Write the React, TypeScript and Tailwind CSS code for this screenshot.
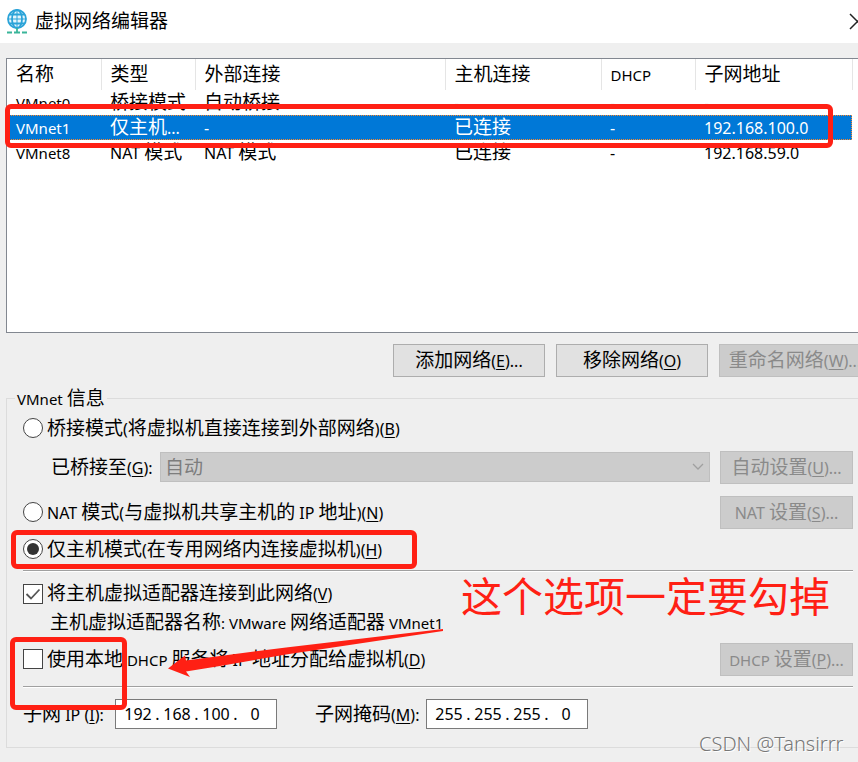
import React, { useState } from "react";

const RED = "#ff2014";

const columns = [
  { name: "名称", width: "w-[94px]" },
  { name: "类型", width: "w-[94px]" },
  { name: "外部连接", width: "w-[250px]" },
  { name: "主机连接", width: "w-[156px]" },
  { name: "DHCP", width: "w-[94px]" },
  { name: "子网地址", width: "w-[157px]" },
];

const networks = [
  ["VMnet0", "桥接模式", "自动桥接", "-", "-", "-"],
  ["VMnet1", "仅主机...", "-", "已连接", "-", "192.168.100.0"],
  ["VMnet8", "NAT 模式", "NAT 模式", "已连接", "-", "192.168.59.0"],
];

// Latin runs are set smaller than the Chinese ones, long words a step below digits and brackets
const Mixed: React.FC<{ text: string; hotkey?: string; tail?: string }> = ({ text, hotkey, tail }) => (
  <span className="whitespace-pre">
    {text.split(/([\x20-\x7e]+)/).map((part, i) =>
      i % 2 ? (
        <span key={i} className={/[A-Za-z]{4}/.test(part) ? "text-[15px] leading-none" : "text-base leading-none"}>
          {part}
        </span>
      ) : (
        part
      )
    )}
    {hotkey && (
      <span className="text-base leading-none">
        (<span className="underline underline-offset-2">{hotkey}</span>){tail}
      </span>
    )}
  </span>
);

const Button: React.FC<{ text: string; hotkey: string; tail?: string; width: string; disabled?: boolean }> = ({
  text,
  hotkey,
  tail,
  width,
  disabled,
}) => (
  <button
    type="button"
    disabled={disabled}
    className={`${width} flex h-[33px] shrink-0 items-center justify-center border ${
      disabled ? "border-[#bfbfbf] bg-[#cccccc] text-[#8a8a8a]" : "border-[#adadad] bg-[#e1e1e1] text-black"
    }`}
  >
    <Mixed text={text} hotkey={hotkey} tail={tail} />
  </button>
);

const Radio: React.FC<{ value: string; mode: string; onPick: (v: string) => void; text: string; hotkey: string }> = ({
  value,
  mode,
  onPick,
  text,
  hotkey,
}) => (
  <label className="flex items-center gap-1">
    <input
      type="radio"
      name="mode"
      checked={mode === value}
      onChange={() => onPick(value)}
      className="grid size-5 shrink-0 appearance-none place-items-center rounded-full border border-[#444] bg-white before:size-3 before:rounded-full checked:before:bg-[#333] checked:before:content-['']"
    />
    <Mixed text={text} hotkey={hotkey} />
  </label>
);

const Checkbox: React.FC<{ initial: boolean; text: string; hotkey: string }> = ({ initial, text, hotkey }) => {
  const [on, setOn] = useState(initial);
  return (
    <label className="flex items-center gap-1">
      <span className="grid shrink-0 place-items-center">
        <input
          type="checkbox"
          checked={on}
          onChange={() => setOn(!on)}
          className="col-start-1 row-start-1 size-5 appearance-none border border-[#444] bg-white"
        />
        {on && (
          <svg viewBox="0 0 20 20" className="pointer-events-none col-start-1 row-start-1 size-5" fill="none" stroke="#555" strokeWidth="1.8">
            <path d="M3.500 10l4.500 4.500 8.500-9" />
          </svg>
        )}
      </span>
      <Mixed text={text} hotkey={hotkey} />
    </label>
  );
};

const IpField: React.FC<{ id: string; octets: string[] }> = ({ id, octets }) => (
  <div className="flex h-[30px] w-[162px] items-center border border-[#7a7a7a] bg-white pl-[6px] text-base leading-none">
    {octets.map((octet, i) => (
      <React.Fragment key={i}>
        {i > 0 && <span className="w-[7px] text-center">.</span>}
        <input
          id={i === 0 ? id : undefined}
          aria-label={`${id} ${i + 1}`}
          defaultValue={octet}
          className="w-8 bg-transparent text-center outline-none"
        />
      </React.Fragment>
    ))}
  </div>
);

const Divider = () => <div className="border-t border-b border-t-[#a0a0a0] border-b-white" />;

const GlobeIcon = () => (
  <svg viewBox="0 0 22 26" className="h-[26px] w-[22px]" fill="none" stroke="#2ba3d8" strokeWidth="1.8">
    <circle cx="11" cy="10" r="9" fill="#e4f5fc" />
    <ellipse cx="11" cy="10" rx="5" ry="9" />
    <path d="M3.500 5.500h15M3.500 14.500h15" />
    <path d="M11 1v18M2 10h18" strokeWidth="1" />
    <path d="M11 19v4" stroke="#3ab59a" />
    <path d="M1 23.500h5M8 23.500h6M16 23.500h5" stroke="#3ab59a" strokeWidth="2" />
  </svg>
);

const App: React.FC = () => {
  const [mode, setMode] = useState("host");

  return (
    <div className="relative min-h-screen overflow-hidden bg-[#efefef] font-['Noto_Sans','Noto_Sans_CJK_SC',sans-serif] text-[19px] leading-none text-black">
      <header className="flex h-[43px] items-center bg-white pl-[6px]">
        <GlobeIcon />
        <h1 className="ml-[7px] flex-1">虚拟网络编辑器</h1>
        <button type="button" aria-label="关闭" className="-mr-2 h-5 w-[17px]">
          <svg viewBox="0 0 17 17" className="size-[17px]" fill="none" stroke="#222" strokeWidth="1.5">
            <path d="M1 1l15 15M16 1L1 16" />
          </svg>
        </button>
      </header>

      <main className="mt-[15px] pl-[6px]">
        <div className="h-[275px] border border-r-0 border-[#828790] bg-white">
          <table className="w-[845px] table-fixed border-collapse text-left">
            <thead>
              <tr className="h-[31px]">
                {columns.map((col) => (
                  <th key={col.name} className={`${col.width} border-r border-[#e5e5e5] p-0 pl-[9px] font-normal`}>
                    <Mixed text={col.name} />
                  </th>
                ))}
              </tr>
            </thead>
            <tbody>
              {networks.map((row) => (
                <tr
                  key={row[0]}
                  className={
                    row[0] === "VMnet1"
                      ? "h-[25px] bg-[#0078d7] text-white outline-1 -outline-offset-1 outline-dotted outline-[#ff8728]"
                      : "h-[25px]"
                  }
                >
                  {row.map((cell, i) => (
                    <td key={i} className="p-0 pl-[9px]">
                      <Mixed text={cell} />
                    </td>
                  ))}
                </tr>
              ))}
            </tbody>
          </table>
        </div>

        <div className="-mr-[13px] mt-[11px] flex justify-end gap-[11px]">
          <Button text="添加网络" hotkey="E" tail="..." width="w-[152px]" />
          <Button text="移除网络" hotkey="O" width="w-[152px]" />
          <Button text="重命名网络" hotkey="W" tail="..." width="w-[152px]" disabled />
        </div>

        <fieldset className="mt-[11px] border border-r-0 border-[#dcdcdc] pb-[18px] pl-4 pr-[5px]">
          <legend className="-ml-2 h-5 px-[2px] leading-5">
            <Mixed text="VMnet 信息" />
          </legend>

          <div className="mt-1 flex h-8 items-center">
            <Radio value="bridge" mode={mode} onPick={setMode} text="桥接模式(将虚拟机直接连接到外部网络)" hotkey="B" />
          </div>

          <div className="mt-[6px] flex h-[34px] items-center pl-7">
            <label htmlFor="bridge" className="w-[109px] shrink-0">
              <Mixed text="已桥接至" hotkey="G" tail=":" />
            </label>
            <div className="relative mr-[10px] flex-1">
              <select
                id="bridge"
                disabled
                className="h-[30px] w-full appearance-none border border-[#bfbfbf] bg-[#cccccc] px-1 leading-none text-[#7d7d7d] opacity-100"
              >
                <option>自动</option>
              </select>
              <svg viewBox="0 0 12 8" className="pointer-events-none absolute right-[6px] top-[11px] h-2 w-3" fill="none" stroke="#a0a0a0" strokeWidth="1.3">
                <path d="M1 1l5 5 5-5" />
              </svg>
            </div>
            <Button text="自动设置" hotkey="U" tail="..." width="w-[133px]" disabled />
          </div>

          <div className="mt-[11px] flex h-[34px] items-center justify-between">
            <Radio value="nat" mode={mode} onPick={setMode} text="NAT 模式(与虚拟机共享主机的 IP 地址)" hotkey="N" />
            <Button text="NAT 设置" hotkey="S" tail="..." width="w-[133px]" disabled />
          </div>

          <div className="mb-[6px] mt-[5px] flex h-[30px] items-center">
            <Radio value="host" mode={mode} onPick={setMode} text="仅主机模式(在专用网络内连接虚拟机)" hotkey="H" />
          </div>

          <Divider />

          <div className="mt-[7px] flex h-[29px] items-center">
            <Checkbox initial={true} text="将主机虚拟适配器连接到此网络" hotkey="V" />
          </div>
          <p className="flex h-7 items-center pl-[27px]">
            <Mixed text="主机虚拟适配器名称: VMware 网络适配器 VMnet1" />
          </p>

          <div className="mb-[10px] mt-[6px] flex h-[34px] items-center justify-between">
            <Checkbox initial={false} text="使用本地 DHCP 服务将 IP 地址分配给虚拟机" hotkey="D" />
            <Button text="DHCP 设置" hotkey="P" tail="..." width="w-[133px]" disabled />
          </div>

          <Divider />

          <div className="mt-[11px] flex h-[30px] items-center">
            <label htmlFor="subnet-ip" className="w-[92px] shrink-0">
              <Mixed text="子网 IP " hotkey="I" tail=":" />
            </label>
            <IpField id="subnet-ip" octets={["192", "168", "100", "0"]} />
            <label htmlFor="subnet-mask" className="ml-[38px] w-[111px] shrink-0">
              <Mixed text="子网掩码" hotkey="M" tail=":" />
            </label>
            <IpField id="subnet-mask" octets={["255", "255", "255", "0"]} />
          </div>
        </fieldset>
      </main>

      {/* hand drawn marks over the dialog */}
      <div className="pointer-events-none absolute left-[5px] top-[104px] h-[44px] w-[828px] rounded-md border-5 border-[#ff2014]" />
      <div className="pointer-events-none absolute left-[11px] top-[530px] h-[39px] w-[406px] rounded-md border-5 border-[#ff2014]" />
      <div className="pointer-events-none absolute left-[10px] top-[637px] h-[73px] w-[117px] rounded-md border-5 border-[#ff2014]" />
      <svg viewBox="0 0 276 50" className="pointer-events-none absolute left-[168px] top-[628px] h-[50px] w-[276px]" fill={RED}>
        <path d="M0 40.500L17 27.500L18 32.500L52 28L118 19.500L275 1V3L118 26.500L52 38L18 43.500L22 49Z" />
      </svg>
      <p className="pointer-events-none absolute left-[461px] top-[576px] whitespace-nowrap text-[41px] text-[#ff2014]">
        这个选项一定要勾掉
      </p>
      <p className="pointer-events-none absolute left-[699px] top-[734px] whitespace-nowrap text-[20px] font-light text-[#777] [text-shadow:1px_1px_0_#fff]">
        CSDN @Tansirrr
      </p>
    </div>
  );
};

export default App;
